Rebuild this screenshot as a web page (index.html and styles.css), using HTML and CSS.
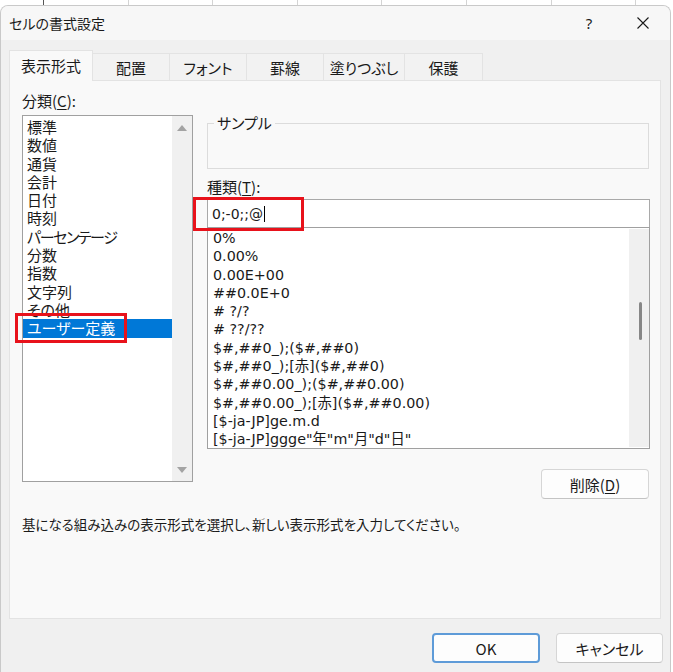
FILE: index.html
```html
<!DOCTYPE html>
<html lang="ja">
<head>
<meta charset="utf-8">
<title>セルの書式設定</title>
<link rel="stylesheet" href="styles.css">
</head>
<body>
<div class="sheet">
  <span class="cell head"></span><span class="cell"></span><span class="cell"></span><span class="cell"></span><span class="cell"></span><span class="cell"></span><span class="cell"></span><span class="cell"></span><span class="cell last"></span>
</div>
<div class="dialog">
  <div class="titlebar">
    <span class="title">セルの書式設定</span>
    <span class="help">?</span>
    <span class="close"><svg width="12" height="12" viewBox="0 0 12 12"><path d="M0.5 0.5 L11.5 11.5 M11.5 0.5 L0.5 11.5" stroke="#1a1a1a" stroke-width="1.1" fill="none"/></svg></span>
  </div>
  <div class="tabs">
    <div class="tab active">表示形式</div>
    <div class="tab t77">配置</div>
    <div class="tab t77">フォント</div>
    <div class="tab t77">罫線</div>
    <div class="tab t81">塗りつぶし</div>
    <div class="tab t78">保護</div>
  </div>
  <div class="panel">
    <div class="main">
      <div class="leftcol">
        <div class="label">分類(<u>C</u>):</div>
        <div class="listbox cat">
          <ul class="items">
            <li>標準</li>
            <li>数値</li>
            <li>通貨</li>
            <li>会計</li>
            <li>日付</li>
            <li>時刻</li>
            <li class="kana">パーセンテージ</li>
            <li>分数</li>
            <li>指数</li>
            <li>文字列</li>
            <li>その他</li>
            <li class="selected">ユーザー定義</li>
          </ul>
          <div class="vscroll arrows">
            <span class="arrow up"></span>
            <span class="arrow down"></span>
          </div>
        </div>
      </div>
      <div class="rightcol">
        <div class="group"><span class="legend">サンプル</span></div>
        <div class="label l2">種類(<u>T</u>):</div>
        <div class="input">0;-0;;@<span class="caret"></span></div>
        <div class="listbox fmt">
          <ul class="items">
            <li>0%</li>
            <li>0.00%</li>
            <li>0.00E+00</li>
            <li>##0.0E+0</li>
            <li># ?/?</li>
            <li># ??/??</li>
            <li>$#,##0_);($#,##0)</li>
            <li>$#,##0_);[赤]($#,##0)</li>
            <li>$#,##0.00_);($#,##0.00)</li>
            <li>$#,##0.00_);[赤]($#,##0.00)</li>
            <li>[$-ja-JP]ge.m.d</li>
            <li>[$-ja-JP]ggge"年"m"月"d"日"</li>
          </ul>
          <div class="vscroll thin"><span class="thumb"></span></div>
        </div>
        <div class="btnrow"><button class="btn del">削除(<u>D</u>)</button></div>
      </div>
    </div>
    <p class="hint">基になる組み込みの表示形式を選択し、新しい表示形式を入力してください。</p>
  </div>
  <div class="footer">
    <button class="btn ok">OK</button>
    <button class="btn cancel">キャンセル</button>
  </div>
  <div class="mark m1"></div>
  <div class="mark m2"></div>
</div>
</body>
</html>
```

FILE: styles.css
```css
* { box-sizing: border-box; margin: 0; padding: 0; }
html, body { width: 673px; height: 672px; overflow: hidden; background: #ffffff; }
body {
  font-family: "Noto Sans CJK JP", "Noto Sans", sans-serif;
  font-feature-settings: "palt";
  color: #1a1a1a;
  font-size: 15px;
}
u { text-decoration: underline; text-underline-offset: 2px; }

.sheet { display: flex; width: 673px; height: 5px; overflow: hidden; background: #fff; }
.cell { flex: none; width: 84.6px; height: 5px; border-right: 1px solid #d4d4d4; }
.cell.head { width: 44px; border-right-color: #555; }
.cell.last { width: 34px; border-right: none; }

.dialog {
  position: relative;
  width: 671px;
  height: 667px;
  background: #f0f0f0;
  border: 1px solid #c9c9c9;
  border-bottom: none;
  border-radius: 8px 8px 0 0;
  overflow: hidden;
  display: flex;
  flex-direction: column;
}

.titlebar {
  height: 34px;
  flex: none;
  display: flex;
  align-items: center;
  padding-left: 8px;
  background: #f7f7f7;
}
.title { font-size: 14px; }
.help { margin-left: auto; width: 24px; text-align: center; font-size: 15px; font-family: "Noto Sans", sans-serif; }
.close { width: 46px; margin-left: 19px; margin-right: 4px; display: flex; justify-content: center; align-items: center; }

.tabs {
  flex: none;
  margin-top: 10px;
  height: 30px;
  display: flex;
  align-items: flex-end;
  padding-left: 8px;
}
.tab {
  height: 27px;
  display: flex;
  align-items: center;
  justify-content: center;
  background: #f2f2f2;
  border: 1px solid #e3e3e3;
  border-left: none;
  border-bottom: none;
  font-size: 15px;
}
.tab.active {
  width: 84px;
  height: 31px;
  margin-bottom: -1px;
  background: #f9f9f9;
  border-left: 1px solid #e3e3e3;
  position: relative;
  z-index: 1;
  padding-bottom: 1px;
}
.t77 { width: 77px; }
.t81 { width: 81px; }
.t78 { width: 78px; }

.panel {
  flex: none;
  margin: 0 9px 0 8px;
  height: 539px;
  background: #f9f9f9;
  border: 1px solid #e3e3e3;
  padding: 10px 0 0 12px;
}
.main { display: flex; }
.leftcol { width: 171px; flex: none; }
.label { height: 20px; line-height: 20px; font-size: 15px; margin-bottom: 4px; }

.listbox {
  display: flex;
  background: #fff;
  border: 1px solid #a0a0a0;
}
.listbox.cat { height: 367px; }
.items { list-style: none; flex: 1; }
.cat .items { padding-top: 2px; }
.cat .items li { height: 18.3px; line-height: 18.3px; padding-left: 4px; font-size: 15px; white-space: nowrap; }
.cat .items li.kana { letter-spacing: -1.4px; }
.cat .items li.selected { background: #0078d7; color: #fff; }

.vscroll { width: 20px; flex: none; background: #f0f0f0; }
.arrows { display: flex; flex-direction: column; justify-content: space-between; align-items: center; padding: 9px 0 8px; }
.arrow { width: 0; height: 0; border-left: 5px solid transparent; border-right: 5px solid transparent; }
.arrow.up { border-bottom: 6px solid #a3a3a3; }
.arrow.down { border-top: 6px solid #a3a3a3; }

.rightcol { width: 443px; flex: none; margin-left: 14px; }
.group {
  margin-top: 32px;
  width: 442px;
  height: 46px;
  border: 1px solid #dcdcdc;
}
.legend {
  display: inline-block;
  margin-top: -10px;
  margin-left: 6px;
  padding: 0 3px;
  line-height: 18px;
  background: #f9f9f9;
  font-size: 15px;
  vertical-align: top;
}
.label.l2 { margin-top: 8px; margin-bottom: 2px; }
.input {
  height: 28px;
  background: #fff;
  border: 1px solid #a9a9a9;
  border-bottom: none;
  display: flex;
  align-items: center;
  padding-left: 4px;
  font-family: "DejaVu Sans", "Noto Sans CJK JP", sans-serif;
  font-feature-settings: normal;
  font-size: 14px;
}
.caret { width: 1px; height: 16px; background: #000; margin-left: 1px; }

.listbox.fmt { height: 222px; width: 443px; }
.fmt .items { padding-top: 1px; }
.fmt .items li {
  height: 18.3px;
  line-height: 18.3px;
  padding-left: 5px;
  white-space: nowrap;
  font-family: "DejaVu Sans", "Noto Sans CJK JP", sans-serif;
  font-feature-settings: normal;
  font-size: 14.3px;
}
.thin { margin: 1px 0; display: flex; justify-content: center; padding-left: 2px; }
.thumb { width: 3px; height: 38px; margin-top: 73px; background: #878787; border-radius: 2px; }

.btnrow { display: flex; justify-content: flex-end; margin-top: 20px; }
.btn {
  font-family: "Noto Sans CJK JP", "Noto Sans", sans-serif;
  font-feature-settings: "palt";
  font-size: 15px;
  color: #1a1a1a;
  height: 30px;
  background: #fdfdfd;
  border: 1px solid #d6d6d6;
  border-bottom-color: #c4c4c4;
  border-radius: 4px;
}
.btn.del { width: 108px; margin-right: 1px; }

.hint { margin-top: 15px; line-height: 20px; font-size: 13.5px; }

.footer {
  flex: none;
  margin-top: 14px;
  display: flex;
  justify-content: flex-end;
  gap: 16px;
  padding-right: 7px;
}
.btn.ok { width: 108px; border: 2px solid #5e9bd8; }
.btn.cancel { width: 107px; }

.mark { position: absolute; border: 3px solid #e8121b; }
.m1 { left: 14px; top: 307px; width: 112px; height: 30px; }
.m2 { left: 192px; top: 191px; width: 111px; height: 34px; }
```
